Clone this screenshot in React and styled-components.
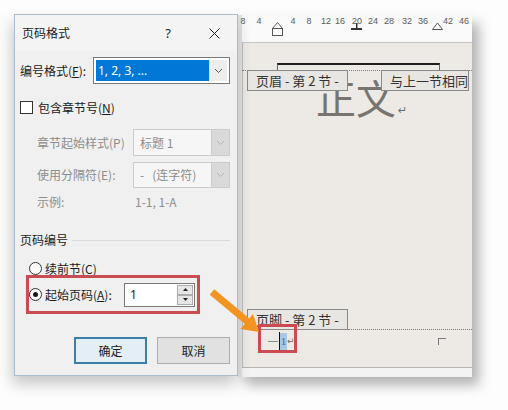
import React from 'react';
import styled, { createGlobalStyle } from 'styled-components';

const cjk = `"Noto Sans CJK SC", "Noto Sans", sans-serif`;
const latin = `"Noto Sans", "Noto Sans CJK SC", sans-serif`;

const GlobalStyle = createGlobalStyle`
  html, body {
    margin: 0;
    padding: 0;
    background: #ffffff;
  }
`;

const Stage = styled.div`
  position: relative;
  width: 508px;
  height: 410px;
  overflow: hidden;
  box-sizing: border-box;
  padding: 14px 0 0 14px;
  display: flex;
  align-items: flex-start;
  background: #fdfdfd;
  font-family: ${cjk};
`;

/* ---------- dialog ---------- */

const Dialog = styled.div`
  position: relative;
  z-index: 2;
  flex: none;
  width: 224px;
  height: 362px;
  box-sizing: border-box;
  background: #f0f0f0;
  border: 1px solid #a9bccb;
  box-shadow: -2px 8px 14px rgba(0, 0, 0, 0.22);
  display: flex;
  flex-direction: column;
  color: #1b1b1b;
  font-size: 12px;
`;

const TitleBar = styled.div`
  height: 36px;
  flex: none;
  display: flex;
  align-items: center;
  padding: 0 8px 0 7px;
  background: #f4f4f4;
`;

const TitleText = styled.div`
  flex: 1;
  line-height: 16px;
`;

const TitleButton = styled.div`
  width: 30px;
  height: 30px;
  margin-left: ${(p) => p.$gap || 0}px;
  display: flex;
  align-items: center;
  justify-content: center;
  font-family: ${latin};
  font-size: 13px;
  color: #222;
`;

const Body = styled.div`
  display: flex;
  flex-direction: column;
  padding: 0 7px 0 5px;
`;

const Row = styled.div`
  display: flex;
  align-items: center;
  flex: none;
  height: ${(p) => p.$h}px;
  margin-top: ${(p) => p.$mt || 0}px;
  padding-left: ${(p) => p.$indent || 0}px;
  color: ${(p) => (p.$muted ? '#8d8d8d' : '#1b1b1b')};
  line-height: 16px;
  white-space: nowrap;
`;

const Label = styled.span`
  flex: none;
  width: ${(p) => p.$w}px;
`;

const Key = styled.span`
  text-decoration: underline;
  text-underline-offset: 1px;
`;

const Combo = styled.div`
  flex: none;
  width: ${(p) => p.$w}px;
  height: 100%;
  box-sizing: border-box;
  display: flex;
  padding: ${(p) => (p.$disabled ? 0 : 2)}px;
  border: 1px solid ${(p) => (p.$disabled ? '#cbcbcb' : '#7a7a7a')};
  background: ${(p) => (p.$disabled ? '#f6f6f6' : '#ffffff')};
`;

const ComboValue = styled.div`
  flex: 1;
  display: flex;
  align-items: center;
  padding-left: ${(p) => (p.$selected ? 2 : 6)}px;
  background: ${(p) => (p.$selected ? '#0078d7' : 'transparent')};
  color: ${(p) => (p.$selected ? '#ffffff' : '#8d8d8d')};
  font-family: ${(p) => (p.$selected ? latin : cjk)};
  font-size: 12px;
`;

const ComboArrow = styled.div`
  flex: none;
  width: 17px;
  display: flex;
  align-items: center;
  justify-content: center;
  background: ${(p) => (p.$disabled ? '#d9d9d9' : '#eeeeee')};
  border-left: 1px solid ${(p) => (p.$disabled ? '#cbcbcb' : '#dddddd')};
`;

const CheckBox = styled.div`
  flex: none;
  width: 13px;
  height: 13px;
  box-sizing: border-box;
  border: 1px solid #333;
  background: #fff;
  margin-right: 5px;
`;

const Radio = styled.div`
  flex: none;
  width: 13px;
  height: 13px;
  box-sizing: border-box;
  border-radius: 50%;
  border: 1px solid #333;
  background: #fff;
  margin-right: 3px;
  display: flex;
  align-items: center;
  justify-content: center;

  &::after {
    content: '';
    display: ${(p) => (p.$checked ? 'block' : 'none')};
    width: 5px;
    height: 5px;
    border-radius: 50%;
    background: #1b1b1b;
  }
`;

const SectionLine = styled.div`
  flex: 1;
  height: 0;
  margin-left: 4px;
  border-top: 1px solid #dadada;
`;

const Highlight = styled.div`
  flex: none;
  display: flex;
  align-items: center;
  width: 174px;
  height: 39px;
  margin-left: 6px;
  box-sizing: border-box;
  border: 3px solid #c94c53;
  white-space: nowrap;
`;

const Spin = styled.div`
  flex: none;
  width: 71px;
  height: 24px;
  box-sizing: border-box;
  display: flex;
  border: 1px solid #7a7a7a;
  background: #fff;
`;

const SpinValue = styled.div`
  flex: 1;
  display: flex;
  align-items: center;
  padding-left: 5px;
  font-family: ${latin};
  font-size: 12px;
`;

const SpinButtons = styled.div`
  flex: none;
  width: 16px;
  padding: 1px;
  display: flex;
  flex-direction: column;
`;

const SpinButton = styled.div`
  flex: 1;
  display: flex;
  align-items: center;
  justify-content: center;
  background: #e6e6e6;
  border: 1px solid #adadad;
`;

const ButtonRow = styled.div`
  display: flex;
  justify-content: flex-end;
  gap: 10px;
  margin-top: 23px;
`;

const DialogButton = styled.button`
  width: 73px;
  height: 27px;
  padding: 0;
  box-sizing: border-box;
  font: 12px ${cjk};
  color: #1b1b1b;
  border: ${(p) => (p.$primary ? '2px solid #3b7fa8' : '1px solid #adadad')};
  background: ${(p) => (p.$primary ? '#e3eef6' : '#e1e1e1')};
`;

/* ---------- document window ---------- */

const DocWindow = styled.div`
  position: relative;
  z-index: 1;
  flex: none;
  width: 234px;
  height: 362px;
  margin-top: 1px;
  display: flex;
  background: #f3f3f3;
  box-shadow: 7px 8px 12px rgba(0, 0, 0, 0.3);
`;

const WindowFrame = styled.div`
  flex: none;
  width: 4px;
  background: #e2e2e2;
`;

const DocMain = styled.div`
  flex: 1;
  display: flex;
  flex-direction: column;
`;

const Ruler = styled.div`
  position: relative;
  flex: none;
  height: 27px;
  background: #f9f9f9;
`;

const RulerNumber = styled.span`
  position: absolute;
  top: 1px;
  transform: translateX(-50%);
  font: 9px/10px "Liberation Sans", sans-serif;
  color: #5a5a5a;
`;

const RulerMarks = styled.svg`
  position: absolute;
  left: 0;
  top: 0;
`;

const Page = styled.div`
  flex: 1;
  display: flex;
  flex-direction: column;
  background: #ede9e4;
  border-top: 1px solid #c6c6c6;
  border-left: 1px solid #bdbdbd;
  border-bottom: 1px solid #b5b5b5;
`;

const HeaderCorner = styled.div`
  flex: none;
  width: 163px;
  height: 7px;
  margin: 20px 0 0 34px;
  box-sizing: border-box;
  border-top: 2px solid #1e1e1e;
  border-left: 1px solid #666;
  border-right: 1px solid #666;
`;

const HeaderBand = styled.div`
  position: relative;
  z-index: 1;
  flex: none;
  margin-left: -1px;
  border-top: 1px dotted #7d7d7d;
`;

const AreaTag = styled.div`
  box-sizing: border-box;
  height: 21px;
  width: ${(p) => p.$w}px;
  padding-left: 8px;
  display: flex;
  align-items: center;
  background: #e8e6e2;
  border: 1px solid #8a8a8a;
  font-size: 13px;
  color: #333;
  white-space: nowrap;
`;

const FloatingTag = styled(AreaTag)`
  position: absolute;
  top: -1px;
  left: ${(p) => p.$x}px;
`;

const FooterTag = styled(AreaTag)`
  margin-left: 5px;
`;

const BodyText = styled.div`
  flex: none;
  margin: 5px 0 0 73px;
  font-size: 40px;
  line-height: 42px;
  color: #78746f;
  white-space: nowrap;
`;

const ReturnMark = styled.span`
  font-family: "DejaVu Sans", sans-serif;
  font-size: ${(p) => p.$size || 10}px;
  color: #6c6c6c;
  margin-left: ${(p) => p.$gap || 0}px;
`;

const Filler = styled.div`
  flex: 1;
`;

const FooterBand = styled.div`
  flex: none;
  display: flex;
  align-items: flex-end;
  margin-left: -1px;
`;

const DottedFill = styled.div`
  flex: 1;
  border-bottom: 1px dotted #7d7d7d;
`;

const FooterRow = styled.div`
  position: relative;
  flex: none;
  height: 37px;
  box-sizing: border-box;
  display: flex;
  align-items: flex-start;
  padding: 2px 26px 0 25px;
`;

const FooterLine = styled.div`
  flex: 1;
  height: 18px;
  display: flex;
  align-items: center;
`;

const Dash = styled.span`
  width: 10px;
  height: 1px;
  background: #8a8a8a;
  margin-right: 1px;
`;

const Caret = styled.span`
  width: 1px;
  height: 18px;
  background: #111;
`;

const PageNumber = styled.span`
  display: flex;
  align-items: center;
  justify-content: center;
  width: 7px;
  height: 17px;
  background: #a9c6e4;
  color: #3d6fa6;
  font: 11px/1 "Liberation Serif", serif;
`;

const CornerMark = styled.span`
  margin-left: auto;
  width: 7px;
  height: 6px;
  border-top: 1px solid #7a7a7a;
  border-left: 1px solid #7a7a7a;
`;

const Annotation = styled.div`
  position: absolute;
  left: 15px;
  top: -6px;
  width: 39px;
  height: 29px;
  box-sizing: border-box;
  border: 3px solid #cc4b52;
`;

const BottomStrip = styled.div`
  flex: none;
  height: 9px;
  background: #f3f3f3;
`;

const Pointer = styled.svg`
  position: absolute;
  left: 0;
  top: 0;
  z-index: 3;
  pointer-events: none;
`;

const rulerNumbers = [
  [1, '8'], [17, '4'], [51, '4'], [67, '8'], [84, '12'], [98, '16'],
  [115, '20'], [131, '24'], [147, '28'], [165, '32'], [181, '36'],
  [206, '42'], [222, '46'],
];

const Chevron = ({ color = '#555' }) => (
  <svg width="9" height="6" viewBox="0 0 9 6">
    <polyline points="1,1 4.5,4.5 8,1" fill="none" stroke={color} strokeWidth="1" />
  </svg>
);

const Triangle = ({ up }) => (
  <svg width="5" height="3" viewBox="0 0 5 3">
    <polygon points={up ? '0,3 2.5,0 5,3' : '0,0 2.5,3 5,0'} fill="#222" />
  </svg>
);

const App = () => (
  <Stage>
    <GlobalStyle />

    <Dialog>
      <TitleBar>
        <TitleText>页码格式</TitleText>
        <TitleButton>?</TitleButton>
        <TitleButton $gap={16}>
          <svg width="11" height="11" viewBox="0 0 11 11">
            <path d="M0.5 0.5 L10.5 10.5 M10.5 0.5 L0.5 10.5" stroke="#222" strokeWidth="1" />
          </svg>
        </TitleButton>
      </TitleBar>

      <Body>
        <Row $h={27} $mt={6}>
          <Label $w={73}>编号格式(<Key>F</Key>):</Label>
          <Combo $w={137}>
            <ComboValue $selected>1, 2, 3, ...</ComboValue>
            <ComboArrow>
              <Chevron />
            </ComboArrow>
          </Combo>
        </Row>

        <Row $h={13} $mt={17}>
          <CheckBox />
          包含章节号(<Key>N</Key>)
        </Row>

        <Row $h={27} $mt={15} $indent={17} $muted>
          <Label $w={96}>章节起始样式(P)</Label>
          <Combo $w={97} $disabled>
            <ComboValue>标题 1</ComboValue>
            <ComboArrow $disabled>
              <Chevron color="#b4b4b4" />
            </ComboArrow>
          </Combo>
        </Row>

        <Row $h={26} $mt={6} $indent={17} $muted>
          <Label $w={96}>使用分隔符(E):</Label>
          <Combo $w={97} $disabled>
            <ComboValue>-&nbsp;&nbsp;&nbsp;(连字符)</ComboValue>
            <ComboArrow $disabled>
              <Chevron color="#b4b4b4" />
            </ComboArrow>
          </Combo>
        </Row>

        <Row $h={16} $mt={6} $indent={17} $muted>
          <Label $w={98}>示例:</Label>
          1-1, 1-A
        </Row>

        <Row $h={16} $mt={22}>
          页码编号
          <SectionLine />
        </Row>

        <Row $h={13} $mt={14} $indent={9}>
          <Radio />
          续前节(<Key>C</Key>)
        </Row>

        <Highlight>
          <Radio $checked />
          <Label $w={79}>起始页码(<Key>A</Key>):</Label>
          <Spin>
            <SpinValue>1</SpinValue>
            <SpinButtons>
              <SpinButton>
                <Triangle up />
              </SpinButton>
              <SpinButton>
                <Triangle />
              </SpinButton>
            </SpinButtons>
          </Spin>
        </Highlight>

        <ButtonRow>
          <DialogButton $primary>确定</DialogButton>
          <DialogButton>取消</DialogButton>
        </ButtonRow>
      </Body>
    </Dialog>

    <DocWindow>
      <WindowFrame />
      <DocMain>
        <Ruler>
          {rulerNumbers.map(([x, n], i) => (
            <RulerNumber key={i} style={{ left: x }}>
              {n}
            </RulerNumber>
          ))}
          <RulerMarks width="230" height="27" viewBox="0 0 230 27">
            {/* left indent */}
            <path d="M30.5 13.5 L35.5 7.5 L40.5 13.5 Z" fill="#fff" stroke="#555" />
            <rect x="30.5" y="13.5" width="10" height="7" fill="#fff" stroke="#555" />
            {/* tab stop */}
            <rect x="109" y="13" width="11" height="2" fill="#333" />
            <rect x="114" y="8" width="1.5" height="5" fill="#333" />
            {/* right indent */}
            <path d="M190.5 14.5 L195.5 8 L200.5 14.5 Z" fill="#fff" stroke="#555" />
          </RulerMarks>
        </Ruler>

        <Page>
          <HeaderCorner />
          <HeaderBand>
            <FloatingTag $x={5} $w={101}>页眉 - 第 2 节 -</FloatingTag>
            <FloatingTag $x={139} $w={88}>与上一节相同</FloatingTag>
          </HeaderBand>

          <BodyText>
            正文
            <ReturnMark $size={11} $gap={2}>↵</ReturnMark>
          </BodyText>

          <Filler />

          <FooterBand>
            <FooterTag $w={101}>页脚 - 第 2 节 -</FooterTag>
            <DottedFill />
          </FooterBand>

          <FooterRow>
            <FooterLine>
              <Dash />
              <Caret />
              <PageNumber>1</PageNumber>
              <ReturnMark $size={9}>↵</ReturnMark>
              <CornerMark />
            </FooterLine>
            <Annotation />
          </FooterRow>
        </Page>
        <BottomStrip />
      </DocMain>
    </DocWindow>

    <Pointer width="508" height="410" viewBox="0 0 508 410">
      <line x1="212" y1="292" x2="248" y2="322" stroke="#f39420" strokeWidth="7" />
      <polygon points="259,332 240.5,329 253,314" fill="#f39420" />
    </Pointer>
  </Stage>
);

export default App;
